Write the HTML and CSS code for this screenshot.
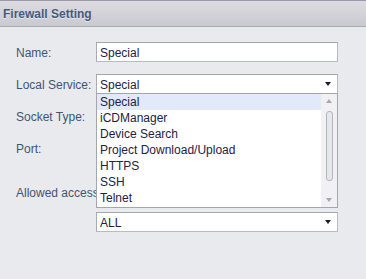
FILE: index.html
```html
<!DOCTYPE html>
<html>
<head>
<meta charset="utf-8">
<link rel="stylesheet" href="styles.css">
</head>
<body>
<div class="header"><span class="title">Firewall Setting</span></div>
<div class="form">
  <div class="row">
    <label class="lbl">Name:</label>
    <div class="field input">Special</div>
  </div>
  <div class="row">
    <label class="lbl">Local Service:</label>
    <div class="field select">Special<span class="arrow"></span>
      <div class="dropdown">
        <ul class="items">
          <li class="item active">Special</li>
          <li class="item">iCDManager</li>
          <li class="item">Device Search</li>
          <li class="item">Project Download/Upload</li>
          <li class="item">HTTPS</li>
          <li class="item">SSH</li>
          <li class="item">Telnet</li>
        </ul>
        <div class="scrollbar">
          <span class="sb-up"></span>
          <span class="sb-thumb"></span>
          <span class="sb-down"></span>
        </div>
      </div>
    </div>
  </div>
  <div class="row">
    <label class="lbl">Socket Type:</label>
    <div class="field select"><span class="arrow"></span></div>
  </div>
  <div class="row">
    <label class="lbl">Port:</label>
    <div class="field input"></div>
  </div>
  <div class="row row-gap">
    <label class="lbl clip">Allowed access</label>
    <div class="field plain"></div>
  </div>
  <div class="row row-sub">
    <span class="lbl"></span>
    <div class="field select">ALL<span class="arrow"></span></div>
  </div>
</div>
</body>
</html>
```
FILE: styles.css
```css
html, body {
  margin: 0;
  padding: 0;
}
body {
  background: #e9eaee;
  font-family: "Liberation Sans", Arial, sans-serif;
  font-size: 12px;
  width: 366px;
  height: 279px;
  overflow: hidden;
}
.header {
  height: 25px;
  border-top: 1px solid #9a9aa8;
  border-bottom: 1px solid #a9aab2;
  background: linear-gradient(#dcdce0, #c9c9d0);
  display: flex;
  align-items: center;
  padding-left: 3px;
}
.title {
  font-weight: bold;
  font-size: 12px;
  color: #465a7e;
  text-shadow: 0 1px 0 rgba(255,255,255,0.5);
}
.form {
  padding: 15px 0 0 16px;
  display: flex;
  flex-direction: column;
  gap: 12px;
}
.row {
  display: grid;
  grid-template-columns: 80px 242px;
  align-items: center;
  height: 20px;
}
.row-gap {
  margin-top: 12px;
}
.row-sub {
  margin-top: -2px;
}
.lbl {
  color: #3f5474;
  white-space: nowrap;
  padding-top: 1px;
}
.clip {
  overflow: hidden;
}
.field {
  position: relative;
  box-sizing: border-box;
  height: 20px;
  line-height: 19px;
  padding-top: 1px;
  padding-left: 3px;
  color: #1d2244;
  background: #fff;
  border: 1px solid #b9bbc3;
  border-top-color: #a4a6ae;
  border-left-color: #a9abb3;
}
.plain {
  background: transparent;
  border-color: transparent;
}
.arrow {
  position: absolute;
  right: 6px;
  top: 7px;
  width: 0;
  height: 0;
  border-left: 3.5px solid transparent;
  border-right: 3.5px solid transparent;
  border-top: 4px solid #1a1a2a;
}
.dropdown {
  position: absolute;
  left: -1px;
  right: -1px;
  top: 18px;
  height: 115px;
  box-sizing: border-box;
  background: #fff;
  border: 1px solid #a4a6ae;
  display: flex;
  z-index: 5;
  line-height: normal;
}
.items {
  list-style: none;
  margin: 0;
  padding: 0;
  flex: 1;
}
.item {
  height: 16px;
  line-height: 17px;
  padding-left: 3px;
  color: #1d2244;
}
.item.active {
  background: #e1e9fa;
}
.scrollbar {
  width: 16px;
  background: #f1f1f4;
  position: relative;
}
.sb-up, .sb-down {
  position: absolute;
  left: 5px;
  width: 0;
  height: 0;
  border-left: 3.5px solid transparent;
  border-right: 3.5px solid transparent;
}
.sb-up {
  top: 5px;
  border-bottom: 4px solid #a6a8b0;
}
.sb-down {
  bottom: 5px;
  border-top: 4px solid #a6a8b0;
}
.sb-thumb {
  position: absolute;
  left: 5px;
  top: 17px;
  width: 5px;
  height: 68px;
  border: 1px solid #b4b6be;
  border-radius: 3px;
  background: #e6e7eb;
}
```
